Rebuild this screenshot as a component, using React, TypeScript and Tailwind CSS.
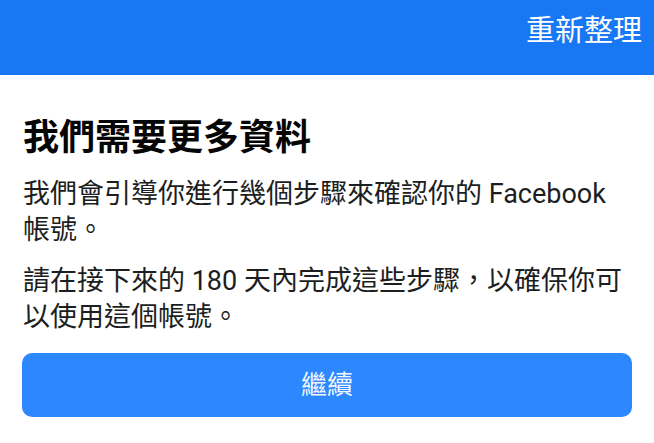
export default function App() {
  return (
    <div
      className="min-h-[443px] w-full bg-white"
      style={{ fontFamily: 'Roboto, "Noto Sans CJK TC", sans-serif' }}
    >
      {/* Top bar */}
      <div className="flex h-[75px] items-start justify-end bg-[#1877f2] pr-3 pt-[13px]">
        <button className="text-[29px] leading-[36px] text-white">重新整理</button>
      </div>

      {/* Content */}
      <div className="px-[22px] pt-[41px]">
        <h1 className="pl-px text-[36px] font-bold leading-[44px] text-[#050505]">
          我們需要更多資料
        </h1>
        <p className="mt-4 pl-px text-[27px] leading-[36px] text-[#1c1e21]">
          我們會引導你進行幾個步驟來確認你的 Facebook 帳號。
        </p>
        <p className="mt-[15px] pl-px text-[27px] leading-[36px] text-[#1c1e21]">
          請在接下來的 180 天內完成這些步驟，以確保你可以使用這個帳號。
        </p>
        <button className="mt-[18px] flex h-[64px] w-full items-center justify-center rounded-[10px] bg-[#2d88ff] text-[26px] text-white/95">
          繼續
        </button>
      </div>
    </div>
  );
}
